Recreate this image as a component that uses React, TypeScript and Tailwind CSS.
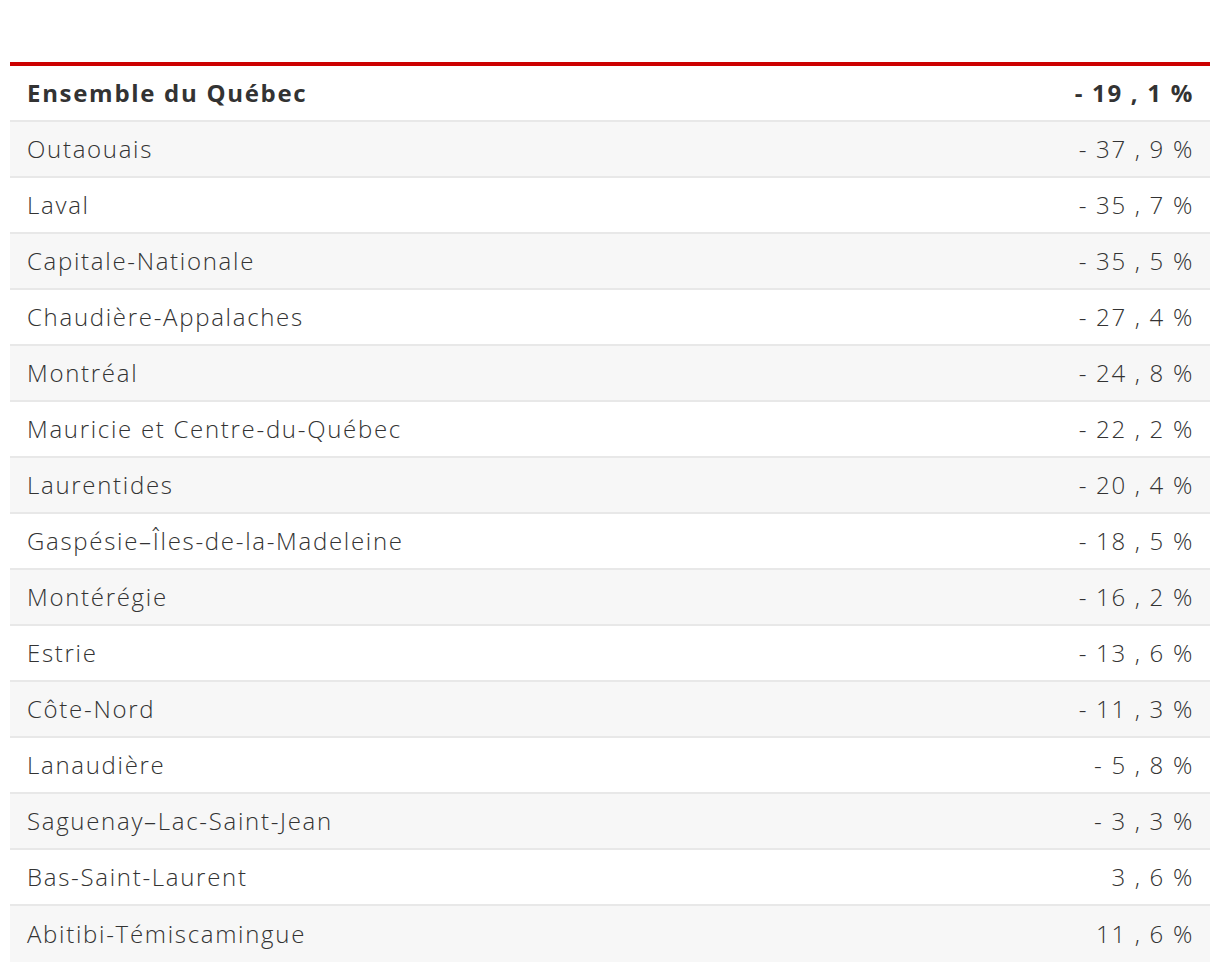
import React from "react"

const rows: [string, string][] = [
    ["Outaouais", "- 37 , 9 %"],
    ["Laval", "- 35 , 7 %"],
    ["Capitale-Nationale", "- 35 , 5 %"],
    ["Chaudière-Appalaches", "- 27 , 4 %"],
    ["Montréal", "- 24 , 8 %"],
    ["Mauricie et Centre-du-Québec", "- 22 , 2 %"],
    ["Laurentides", "- 20 , 4 %"],
    ["Gaspésie–Îles-de-la-Madeleine", "- 18 , 5 %"],
    ["Montérégie", "- 16 , 2 %"],
    ["Estrie", "- 13 , 6 %"],
    ["Côte-Nord", "- 11 , 3 %"],
    ["Lanaudière", "- 5 , 8 %"],
    ["Saguenay–Lac-Saint-Jean", "- 3 , 3 %"],
    ["Bas-Saint-Laurent", "3 , 6 %"],
    ["Abitibi-Témiscamingue", "11 , 6 %"],
]

const App = () => {
    return (
        <div className="w-[1220px] h-[970px] bg-white pt-[62px] px-[10px]" style={{ fontFamily: '"Open Sans", "Liberation Sans", sans-serif' }}>
            <div className="border-t-4 border-[#cc0000] text-[#333] text-[24px] tracking-[1.7px]">
                {/* total row */}
                <div className="h-[56px] flex items-center justify-between pl-[17px] pr-[16px] font-bold border-b-2 border-[#e8e8e8]">
                    <span>Ensemble du Québec</span>
                    <span>- 19 , 1 %</span>
                </div>
                {rows.map(([name, value], i) => (
                    <div
                        key={name}
                        className={`h-[56px] flex items-center justify-between pl-[17px] pr-[16px] font-light ${i % 2 === 0 ? "bg-[#f7f7f7]" : "bg-white"} ${i < rows.length - 1 ? "border-b-2 border-[#e8e8e8]" : ""}`}
                    >
                        <span>{name}</span>
                        <span>{value}</span>
                    </div>
                ))}
            </div>
        </div>
    )
}

export default App
